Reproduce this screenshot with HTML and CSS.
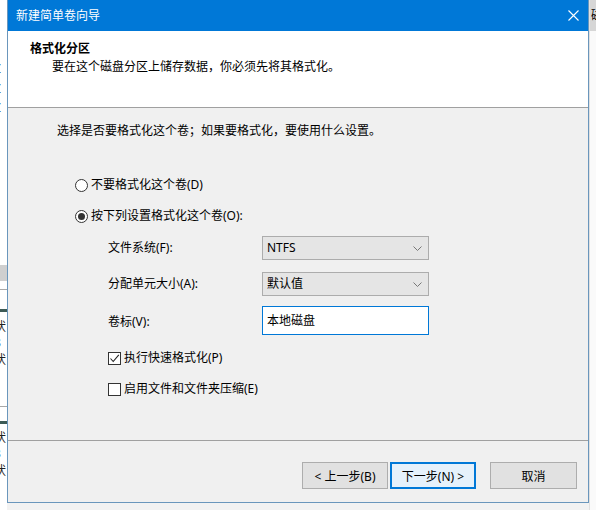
FILE: index.html
```html
<!DOCTYPE html>
<html lang="zh-CN">
<head>
    <meta charset="UTF-8">
    <title>新建简单卷向导</title>
    <link rel="stylesheet" href="styles.css">
</head>
<body>
    <div class="desktop">
        <div class="behind-left">
            <span class="bl-glyph g1">(</span>
            <span class="bl-glyph g2">(</span>
            <span class="bl-glyph g3">Z</span>
            <span class="bl-glyph g4">Z</span>
            <span class="bl-glyph g5">Z</span>
            <div class="bl-bar"></div>
            <div class="bl-line l1"></div>
            <div class="bl-mark m1"></div>
            <span class="bl-glyph g6">状</span>
            <span class="bl-glyph g7">8</span>
            <span class="bl-glyph g8">状</span>
            <div class="bl-line l2"></div>
            <div class="bl-mark m2"></div>
            <span class="bl-glyph g9">状</span>
            <span class="bl-glyph g10">3</span>
            <span class="bl-glyph g11">状</span>
        </div>

        <div class="dialog">
            <div class="titlebar">
                <span class="title">新建简单卷向导</span>
                <svg class="close" width="11" height="11" viewBox="0 0 11 11">
                    <path d="M0.5 0.5 L10.5 10.5 M10.5 0.5 L0.5 10.5" stroke="#fff" stroke-width="1.1" fill="none"/>
                </svg>
            </div>

            <div class="header">
                <div class="h-title">格式化分区</div>
                <div class="h-sub">要在这个磁盘分区上储存数据，你必须先将其格式化。</div>
            </div>

            <div class="content">
                <div class="intro">选择是否要格式化这个卷；如果要格式化，要使用什么设置。</div>

                <label class="radio-row first">
                    <span class="radio"></span>不要格式化这个卷(D)
                </label>
                <label class="radio-row">
                    <span class="radio checked"></span>按下列设置格式化这个卷(O):
                </label>

                <div class="fields">
                    <span class="f-label">文件系统(F):</span>
                    <div class="select">NTFS
                        <svg class="chev" width="9" height="5" viewBox="0 0 9 5"><path d="M0.5 0.5 L4.5 4.5 L8.5 0.5" stroke="#777" fill="none"/></svg>
                    </div>
                    <span class="f-label">分配单元大小(A):</span>
                    <div class="select">默认值
                        <svg class="chev" width="9" height="5" viewBox="0 0 9 5"><path d="M0.5 0.5 L4.5 4.5 L8.5 0.5" stroke="#777" fill="none"/></svg>
                    </div>
                    <span class="f-label">卷标(V):</span>
                    <div class="textbox">本地磁盘</div>
                </div>

                <label class="check-row first">
                    <span class="check">
                        <svg width="11" height="11" viewBox="0 0 11 11"><path d="M1.5 5.5 L4.2 8.5 L9.8 1.8" stroke="#222" stroke-width="1.1" fill="none"/></svg>
                    </span>执行快速格式化(P)
                </label>
                <label class="check-row">
                    <span class="check"></span>启用文件和文件夹压缩(E)
                </label>
            </div>

            <div class="footer">
                <button class="btn">&lt; 上一步(B)</button>
                <button class="btn default">下一步(N) &gt;</button>
                <button class="btn cancel">取消</button>
            </div>
        </div>

        <div class="behind-right">
            <div class="br-title"><span>磁</span></div>
        </div>
    </div>
</body>
</html>
```

FILE: styles.css
```css
body {
    margin: 0;
    font-family: "Noto Sans", "Noto Sans CJK SC", sans-serif;
    font-size: 12px;
    color: #000;
}

.desktop {
    width: 596px;
    height: 510px;
    display: flex;
    align-items: flex-start;
    background: #f2f2f2;
    overflow: hidden;
}

/* window behind, left edge */
.behind-left {
    position: relative;
    width: 7px;
    height: 510px;
    flex: none;
    background: #fff;
    overflow: hidden;
}

.bl-glyph {
    position: absolute;
    left: -6px;
    font-size: 12px;
    line-height: 14px;
    color: #222;
}

.g1 { top: 23px; }
.g2 { top: 43px; }
.g3 { top: 62px; }
.g4 { top: 82px; }
.g5 { top: 101px; }
.g6 { top: 320px; }
.g7 { top: 336px; }
.g8 { top: 353px; }
.g9 { top: 431px; }
.g10 { top: 447px; }
.g11 { top: 464px; }

.bl-bar {
    position: absolute;
    left: 0;
    top: 265px;
    width: 7px;
    height: 16px;
    background: #cfcfcf;
}

.bl-line {
    position: absolute;
    left: 0;
    width: 7px;
    height: 1px;
    background: #a8a8a8;
}

.l1 { top: 289px; }
.l2 { top: 406px; }

.bl-mark {
    position: absolute;
    left: 0;
    width: 7px;
    height: 3px;
    background: #3c5a55;
}

.m1 { top: 309px; }
.m2 { top: 421px; }

/* the wizard dialog */
.dialog {
    width: 582px;
    height: 503px;
    flex: none;
    box-sizing: border-box;
    border: 1px solid #6a96bc;
    border-top: 0;
    background: #f0f0f0;
    display: flex;
    flex-direction: column;
}

.titlebar {
    height: 31px;
    flex: none;
    background: #0078d7;
    color: #fff;
    display: flex;
    align-items: center;
    justify-content: space-between;
    padding: 0 9px 0 8px;
}

.title {
    font-size: 12px;
    line-height: 16px;
}

.header {
    height: 77px;
    flex: none;
    box-sizing: border-box;
    background: #fff;
    border-bottom: 1px solid #a0a0a0;
    padding: 10px 0 0 22px;
    line-height: 16px;
}

.h-title {
    font-weight: bold;
}

.h-sub {
    margin-top: 2px;
    padding-left: 22px;
}

.content {
    height: 333px;
    flex: none;
    box-sizing: border-box;
    border-bottom: 1px solid #a0a0a0;
    padding: 15px 0 0 49px;
    line-height: 16px;
}

.radio-row,
.check-row {
    display: flex;
    align-items: center;
    height: 20px;
    gap: 3px;
}

.radio-row {
    margin: 11px 0 0 18px;
}

.radio-row.first {
    margin-top: 36px;
}

.radio {
    width: 13px;
    height: 13px;
    box-sizing: border-box;
    border: 1px solid #333;
    border-radius: 50%;
    background: #fff;
    display: flex;
    align-items: center;
    justify-content: center;
}

.radio.checked::after {
    content: "";
    width: 7px;
    height: 7px;
    border-radius: 50%;
    background: #333;
}

.fields {
    display: grid;
    grid-template-columns: 154px 167px;
    grid-auto-rows: auto;
    row-gap: 12px;
    align-items: center;
    margin: 10px 0 0 51px;
}

.select {
    height: 24px;
    box-sizing: border-box;
    border: 1px solid #acacac;
    background: #e5e5e5;
    display: flex;
    align-items: center;
    justify-content: space-between;
    padding: 0 6px 0 4px;
}

.textbox {
    height: 29px;
    box-sizing: border-box;
    border: 1px solid #0078d7;
    background: #fff;
    display: flex;
    align-items: center;
    padding-left: 4px;
    margin-top: -2px;
}

.check-row {
    margin: 11px 0 0 51px;
}

.check-row.first {
    margin-top: 13px;
}

.check {
    width: 13px;
    height: 13px;
    box-sizing: border-box;
    border: 1px solid #333;
    background: #fff;
    display: flex;
    align-items: center;
    justify-content: center;
}

.footer {
    height: 61px;
    flex: none;
    box-sizing: border-box;
    display: flex;
    justify-content: flex-end;
    align-items: flex-start;
    padding: 21px 11px 0 0;
}

.btn {
    width: 86px;
    height: 27px;
    box-sizing: border-box;
    border: 1px solid #adadad;
    background: #e1e1e1;
    font-family: inherit;
    font-size: 12px;
    color: #000;
    padding: 0;
    margin-left: 2px;
}

.btn.default {
    border: 2px solid #0078d7;
    background: #e5f1fb;
}

.btn.cancel {
    margin-left: 14px;
    width: 87px;
}

/* window behind, right edge */
.behind-right {
    width: 7px;
    height: 510px;
    flex: none;
    background: #fafafa;
    overflow: hidden;
    border-left: 1px solid #e0e0e0;
}

.br-title {
    height: 31px;
    background: #d6d6d6;
    overflow: hidden;
    line-height: 31px;
}

.br-title span {
    display: inline-block;
    margin-left: 1px;
    font-size: 12px;
}
```
